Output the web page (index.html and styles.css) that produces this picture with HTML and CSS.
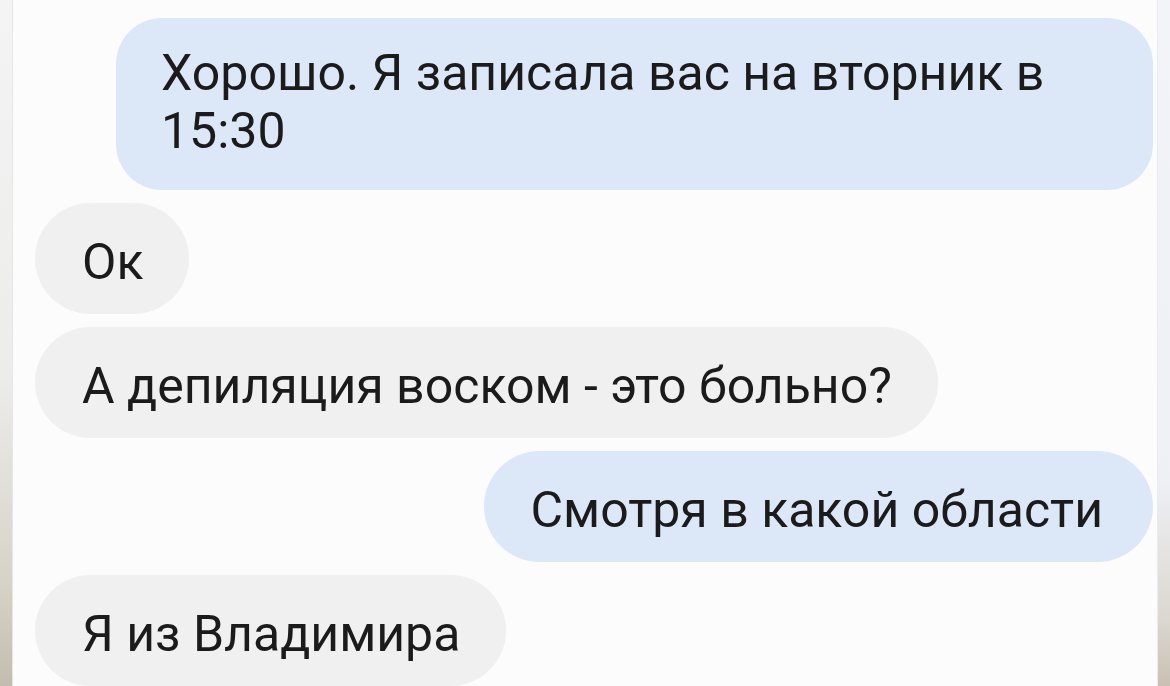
FILE: index.html
```html
<!DOCTYPE html>
<html lang="ru">
<head>
    <meta charset="UTF-8">
    <title>Переписка</title>
    <link rel="stylesheet" href="styles.css">
</head>
<body>
    <div class="frame">
        <div class="edge edge-left"></div>
        <div class="chat">
            <div class="msg msg-out msg-wide">Хорошо. Я записала вас на вторник в 15:30</div>
            <div class="msg msg-in">Ок</div>
            <div class="msg msg-in">А депиляция воском - это больно?</div>
            <div class="msg msg-out">Смотря в какой области</div>
            <div class="msg msg-in">Я из Владимира</div>
        </div>
        <div class="edge edge-right"></div>
    </div>
</body>
</html>
```

FILE: styles.css
```css
html, body {
    margin: 0;
    padding: 0;
    height: 100%;
    overflow: hidden;
}

body {
    font-family: Roboto, "Noto Sans", Arial, sans-serif;
    background: #fcfcfd;
    color: #1b1b1b;
}

.frame {
    display: flex;
    height: 686px;
}

.edge {
    flex: none;
}

.edge-left {
    width: 12px;
    background: linear-gradient(to bottom, #f4f4f4 0%, #ececeb 55%, #d6d3c8 85%, #c2bdaf 100%);
    border-right: 1px solid #e6e6e6;
}

.edge-right {
    width: 12px;
    background: linear-gradient(to bottom, #f3f4f9 0%, #eef0f6 70%, #dcd8d0 90%, #c9c0b4 100%);
    border-left: 1px solid #e9ebf1;
}

.chat {
    flex: 1;
    display: flex;
    flex-direction: column;
    gap: 13px;
    padding: 18px 4px 0 22px;
}

.msg {
    flex: none;
    max-width: 1037px;
    box-sizing: border-box;
    padding: 30px 50px 23px 47px;
    border-radius: 56px;
    font-size: 50px;
    line-height: 58px;
}

.msg-in {
    align-self: flex-start;
    background: #f0f0f1;
    padding-right: 46px;
}

.msg-out {
    align-self: flex-end;
    background: #dce8f8;
}

.msg-wide {
    width: 1037px;
    padding: 26px 50px 30px 45px;
    border-radius: 46px;
}
```
